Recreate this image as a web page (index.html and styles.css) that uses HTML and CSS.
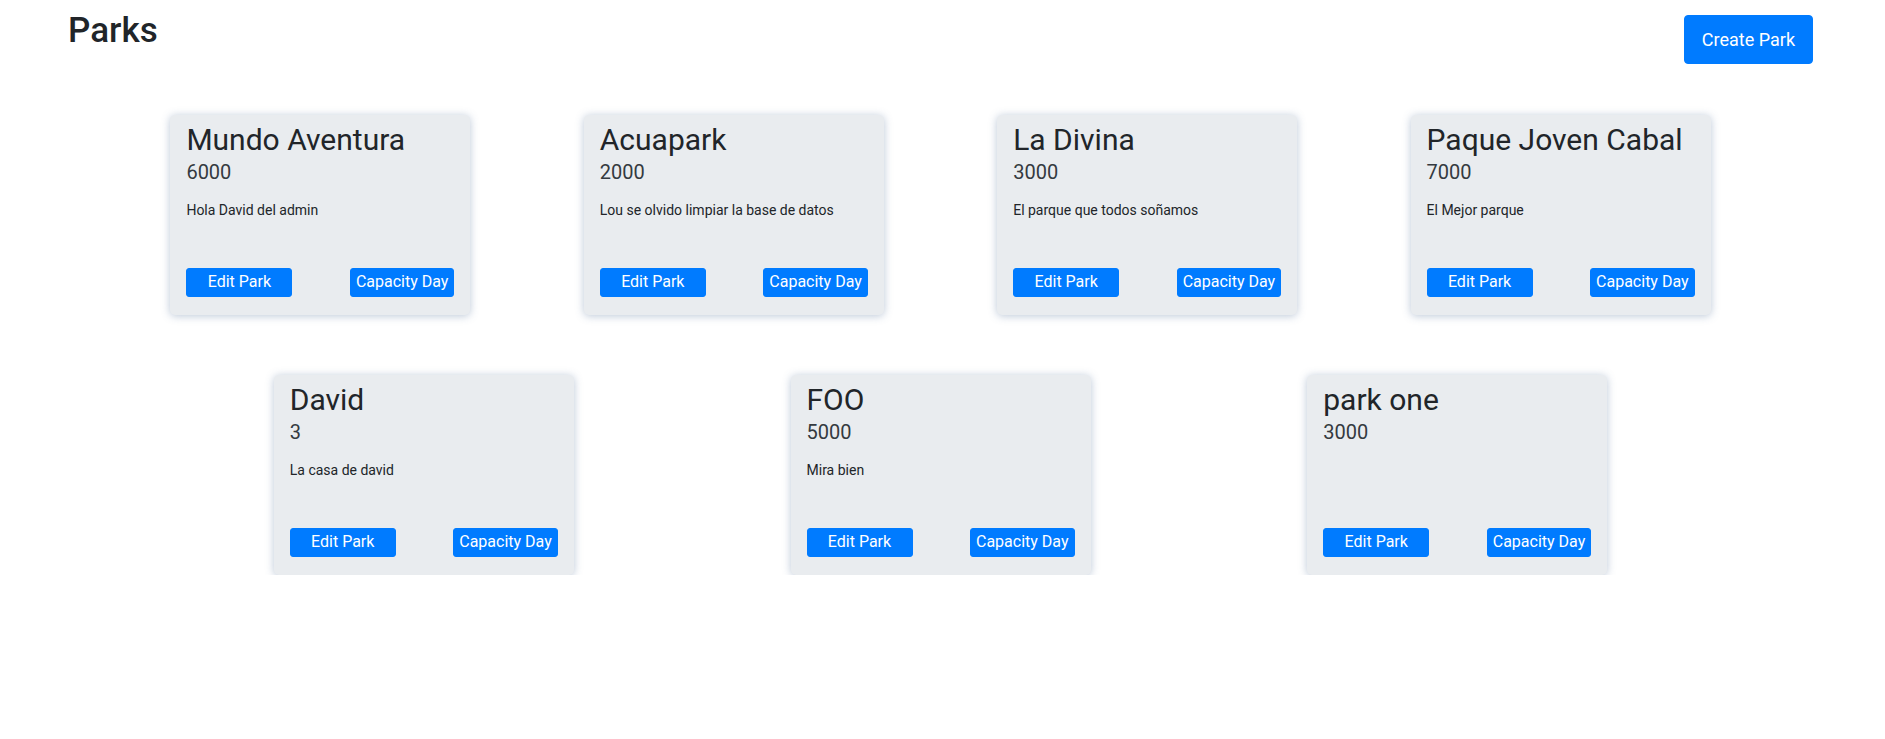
FILE: index.html
```html
<!DOCTYPE html>
<html lang="es">
<head>
<meta charset="utf-8">
<title>Parks</title>
<link rel="stylesheet" href="styles.css">
</head>
<body>
<div class="page">
  <header class="header">
    <h1 class="page-title">Parks</h1>
    <button class="btn btn-lg">Create Park</button>
  </header>
  <main class="parks">
    <div class="park-row">
      <div class="card">
        <h3 class="card-title">Mundo Aventura</h3>
        <h5 class="card-sub">6000</h5>
        <p class="card-text">Hola David del admin</p>
        <div class="card-actions"><button class="btn btn-edit">Edit Park</button><button class="btn">Capacity Day</button></div>
      </div>
      <div class="card">
        <h3 class="card-title">Acuapark</h3>
        <h5 class="card-sub">2000</h5>
        <p class="card-text">Lou se olvido limpiar la base de datos</p>
        <div class="card-actions"><button class="btn btn-edit">Edit Park</button><button class="btn">Capacity Day</button></div>
      </div>
      <div class="card">
        <h3 class="card-title">La Divina</h3>
        <h5 class="card-sub">3000</h5>
        <p class="card-text">El parque que todos soñamos</p>
        <div class="card-actions"><button class="btn btn-edit">Edit Park</button><button class="btn">Capacity Day</button></div>
      </div>
      <div class="card">
        <h3 class="card-title">Paque Joven Cabal</h3>
        <h5 class="card-sub">7000</h5>
        <p class="card-text">El Mejor parque</p>
        <div class="card-actions"><button class="btn btn-edit">Edit Park</button><button class="btn">Capacity Day</button></div>
      </div>
    </div>
    <div class="park-row">
      <div class="card">
        <h3 class="card-title">David</h3>
        <h5 class="card-sub">3</h5>
        <p class="card-text">La casa de david</p>
        <div class="card-actions"><button class="btn btn-edit">Edit Park</button><button class="btn">Capacity Day</button></div>
      </div>
      <div class="card">
        <h3 class="card-title">FOO</h3>
        <h5 class="card-sub">5000</h5>
        <p class="card-text">Mira bien</p>
        <div class="card-actions"><button class="btn btn-edit">Edit Park</button><button class="btn">Capacity Day</button></div>
      </div>
      <div class="card">
        <h3 class="card-title">park one</h3>
        <h5 class="card-sub">3000</h5>
        <p class="card-text"></p>
        <div class="card-actions"><button class="btn btn-edit">Edit Park</button><button class="btn">Capacity Day</button></div>
      </div>
    </div>
  </main>
</div>
</body>
</html>
```
FILE: styles.css
```css
* { box-sizing: border-box; }
html, body {
  margin: 0;
  padding: 0;
  background: #fff;
  font-family: Roboto, "Liberation Sans", sans-serif;
  color: #212529;
}
.page {
  padding-top: 10px;
}
.header {
  display: flex;
  justify-content: space-between;
  align-items: flex-start;
  padding: 0 72px 0 68px;
}
.page-title {
  margin: 0;
  font-size: 35px;
  font-weight: 500;
  line-height: 1.2;
  color: #212529;
}
.btn {
  font-family: Roboto, "Liberation Sans", sans-serif;
  background: #007bff;
  color: #fff;
  border: 1px solid #007bff;
  border-radius: 3px;
  font-size: 16px;
  line-height: 24px;
  padding: 1.7px 5px;
  cursor: pointer;
}
.btn-lg {
  margin-top: 5px;
  font-size: 18px;
  line-height: 27px;
  padding: 10px 17px;
  border-radius: 4px;
}
.btn-edit {
  width: 106px;
}
.parks {
  margin-top: 51px;
  padding: 0 61px 0 57px;
  display: flex;
  flex-direction: column;
  gap: 60px;
}
.park-row {
  display: flex;
  justify-content: space-evenly;
}
.card {
  width: 300px;
  height: 200px;
  background: #e9ecef;
  border-radius: 5px;
  box-shadow: 0 1px 8px rgba(60, 95, 140, 0.35);
  padding: 7px 16px 18px;
  display: flex;
  flex-direction: column;
}
.card-title {
  margin: 0 0 2px;
  font-size: 30px;
  font-weight: 400;
  line-height: 1.2;
  color: #212529;
}
.card-sub {
  margin: 0;
  font-size: 20px;
  font-weight: 400;
  line-height: 1.2;
  color: #343a40;
}
.card-text {
  margin: 16px 0 0;
  font-size: 14px;
  line-height: 21px;
  min-height: 21px;
  color: #212529;
}
.card-actions {
  margin-top: auto;
  display: flex;
  justify-content: space-between;
}
```
